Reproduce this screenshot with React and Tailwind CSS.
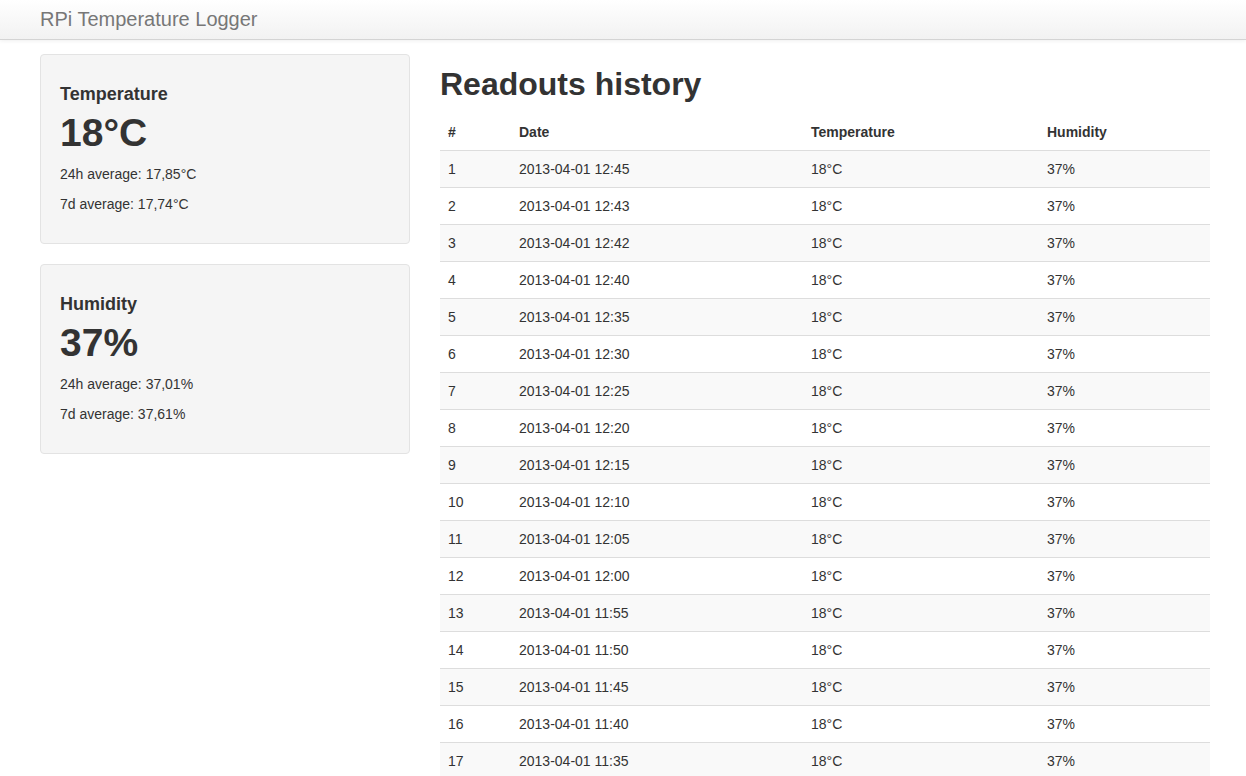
import React from "react";

const times = [
  "12:45", "12:43", "12:42", "12:40", "12:35", "12:30", "12:25", "12:20", "12:15", "12:10",
  "12:05", "12:00", "11:55", "11:50", "11:45", "11:40", "11:35", "11:30", "11:25", "11:20",
];

const readouts = times.map((time, i) => ({
  id: i + 1,
  date: `2013-04-01 ${time}`,
  temperature: "18°C",
  humidity: "37%",
}));

const StatCard = ({ title, value, day, week }) => {
  return (
    <div className="bg-[#f5f5f5] border border-[#e3e3e3] rounded-[4px] px-[19px] pt-[19px] pb-[19px]">
      <h4 className="mt-[10px] text-[18px] leading-[20px] font-bold">{title}</h4>
      <div className="mt-[7px] text-[39px] leading-[44px] font-bold">{value}</div>
      <p className="mt-[9px] text-[14px] leading-[20px]">24h average: {day}</p>
      <p className="mt-[10px] mb-[10px] text-[14px] leading-[20px]">7d average: {week}</p>
    </div>
  );
};

const App = () => {
  return (
    <div className="min-h-screen bg-white text-[#333] font-['Liberation_Sans',Arial,sans-serif]">
      <div className="h-10 bg-gradient-to-b from-white to-[#f2f2f2] border-b border-[#d4d4d4] shadow-[0_1px_4px_rgba(0,0,0,0.065)]">
        <div className="w-[1170px] ml-10">
          <div className="text-[20px] leading-[39px] text-[#777]">RPi Temperature Logger</div>
        </div>
      </div>

      <div className="w-[1170px] ml-10 pt-[14px] flex gap-[30px]">
        <div className="w-[370px] flex flex-col gap-5">
          <StatCard title="Temperature" value="18°C" day="17,85°C" week="17,74°C" />
          <StatCard title="Humidity" value="37%" day="37,01%" week="37,61%" />
        </div>

        <div className="w-[770px]">
          <h1 className="mt-[12px] mb-[12px] text-[32px] leading-[36px] font-bold">Readouts history</h1>
          <table className="w-full table-fixed border-collapse text-[14px] leading-[20px]">
            <thead>
              <tr>
                <th className="w-[71px] p-2 text-left font-bold">#</th>
                <th className="w-[292px] p-2 text-left font-bold">Date</th>
                <th className="w-[236px] p-2 text-left font-bold">Temperature</th>
                <th className="p-2 text-left font-bold">Humidity</th>
              </tr>
            </thead>
            <tbody>
              {readouts.map((r) => (
                <tr key={r.id} className="odd:bg-[#f9f9f9]">
                  <td className="p-2 border-t border-[#ddd]">{r.id}</td>
                  <td className="p-2 border-t border-[#ddd]">{r.date}</td>
                  <td className="p-2 border-t border-[#ddd]">{r.temperature}</td>
                  <td className="p-2 border-t border-[#ddd]">{r.humidity}</td>
                </tr>
              ))}
            </tbody>
          </table>
        </div>
      </div>
    </div>
  );
};

export default App;
